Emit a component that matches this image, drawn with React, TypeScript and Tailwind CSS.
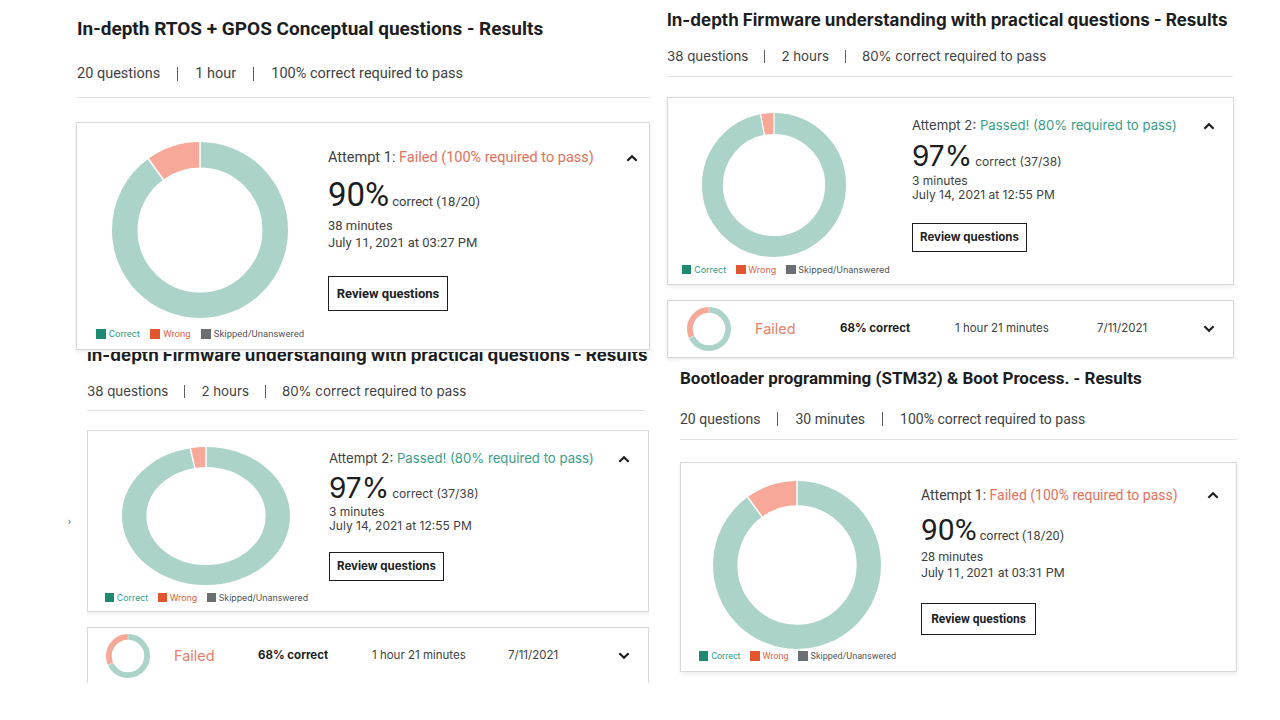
import React from 'react';

// Four pasted result screenshots on a blank canvas

const TEAL = '#acd3ca';
const SALMON = '#f8a899';

type Look = {
  box: string;
  title: string;
  meta: string;
  pipe: string;
  divider: string;
  card: string;
  left: string;
  donut: string;
  donutW: number;
  donutH: number;
  legend: string;
  right: string;
  head: string;
  attempt: string;
  big: string;
  bigNum: string;
  bigSub: string;
  info: string;
  button: string;
  row?: string;
  rowCells?: string[];
};

type Result = {
  title: string;
  meta: string[];
  num: number;
  passed: boolean;
  required: string;
  pct: number;
  detail: string;
  duration: string;
  date: string;
  collapsed?: boolean;
};

const Donut = ({ w, h, pct, t = 14.5 }: { w: number; h: number; pct: number; t?: number }) => {
  const r = 50 - t / 2;
  const sep = (ang: number) => {
    const s = Math.sin(ang);
    const c = Math.cos(ang);
    return (
      <line
        x1={50 + (r - t / 2 - 0.5) * s}
        y1={50 - (r - t / 2 - 0.5) * c}
        x2={50 + (r + t / 2 + 0.5) * s}
        y2={50 - (r + t / 2 + 0.5) * c}
        stroke="white"
        strokeWidth={0.9}
      />
    );
  };
  return (
    <svg width={w} height={h} viewBox="0 0 100 100" preserveAspectRatio="none" className="block">
      <circle
        cx="50"
        cy="50"
        r={r}
        fill="none"
        stroke={TEAL}
        strokeWidth={t}
        pathLength={100}
        strokeDasharray={`${pct} 100`}
        transform="rotate(-90 50 50)"
      />
      <circle
        cx="50"
        cy="50"
        r={r}
        fill="none"
        stroke={SALMON}
        strokeWidth={t}
        pathLength={100}
        strokeDasharray={`${100 - pct} 100`}
        strokeDashoffset={-pct}
        transform="rotate(-90 50 50)"
      />
      {sep(0)}
      {sep((pct / 100) * Math.PI * 2)}
    </svg>
  );
};

const Chevron = ({ down = false }: { down?: boolean }) => (
  <svg width="12" height="8" viewBox="0 0 12 8" className={`block shrink-0 ${down ? 'rotate-180' : ''}`}>
    <path d="M1.4 6.8 L6 2.2 L10.6 6.8" fill="none" stroke="#1c1d1f" strokeWidth="2.1" />
  </svg>
);

const Legend = ({ cls }: { cls: string }) => (
  <div className={`flex items-center ${cls}`}>
    <span className="w-[1.05em] h-[1.05em] bg-[#1e8a72] mr-[0.3em]" />
    <span className="text-[#2f9c86] mr-[1.1em]">Correct</span>
    <span className="w-[1.05em] h-[1.05em] bg-[#e1552f] mr-[0.3em]" />
    <span className="text-[#e5603f] mr-[1.1em]">Wrong</span>
    <span className="w-[1.05em] h-[1.05em] bg-[#6a6f73] mr-[0.3em]" />
    <span className="text-[#4f5458]">Skipped/Unanswered</span>
  </div>
);

const Panel = ({ r, look }: { r: Result; look: Look }) => (
  <div className={`absolute bg-white text-[#1c1d1f] ${look.box}`}>
    <h2 className={`font-bold whitespace-nowrap ${look.title}`}>{r.title}</h2>
    <div className={`flex items-center whitespace-nowrap text-[#3e4143] ${look.meta}`}>
      {r.meta.map((m, i) => (
        <React.Fragment key={m}>
          {i > 0 && <span className={`inline-block w-px bg-[#5a5e62] ${look.pipe}`} />}
          <span>{m}</span>
        </React.Fragment>
      ))}
    </div>
    <div className={`h-px bg-[#e3e3e3] ${look.divider}`} />

    {/* expanded attempt */}
    <div className={`flex border border-[#d6d8da] bg-white shadow-[0_2px_4px_rgba(0,0,0,0.08)] ${look.card}`}>
      <div className={`shrink-0 ${look.left}`}>
        <div className={look.donut}>
          <Donut w={look.donutW} h={look.donutH} pct={r.pct} />
        </div>
        <Legend cls={look.legend} />
      </div>
      <div className={`flex-1 ${look.right}`}>
        <div className={`flex items-center justify-between ${look.head}`}>
          <div className={`whitespace-nowrap text-[#3e4143] ${look.attempt}`}>
            Attempt {r.num}:{' '}
            <span className={r.passed ? 'text-[#3a9e87]' : 'text-[#e4705a]'}>
              {r.passed ? 'Passed!' : 'Failed'} ({r.required})
            </span>
          </div>
          <Chevron />
        </div>
        <div className={`flex items-baseline ${look.big}`}>
          <span className={look.bigNum}>{r.pct}%</span>
          <span className={`text-[#3e4143] ${look.bigSub}`}>{r.detail}</span>
        </div>
        <div className={`text-[#3e4143] ${look.info}`}>
          <div>{r.duration}</div>
          <div>{r.date}</div>
        </div>
        <button className={`flex items-center justify-center border border-[#1c1d1f] font-bold bg-white ${look.button}`}>
          Review questions
        </button>
      </div>
    </div>

    {/* earlier attempt, collapsed */}
    {r.collapsed && look.row && look.rowCells && (
      <div className={`flex items-center border border-[#d6d8da] bg-white shadow-[0_2px_4px_rgba(0,0,0,0.08)] ${look.row}`}>
        <div className={look.rowCells[0]}>
          <Donut w={44} h={44} pct={68} t={13} />
        </div>
        <span className={`text-[14.5px] text-[#e8806a] ${look.rowCells[1]}`}>Failed</span>
        <span className={`text-[11.5px] font-bold ${look.rowCells[2]}`}>68% correct</span>
        <span className={`text-[11.5px] text-[#3e4143] ${look.rowCells[3]}`}>1 hour 21 minutes</span>
        <span className="text-[11.5px] text-[#3e4143]">7/11/2021</span>
        <div className={`ml-auto ${look.rowCells[4]}`}>
          <Chevron down />
        </div>
      </div>
    )}
  </div>
);

const firmware: Result = {
  title: 'In-depth Firmware understanding with practical questions - Results',
  meta: ['38 questions', '2 hours', '80% correct required to pass'],
  num: 2,
  passed: true,
  required: '80% required to pass',
  pct: 97,
  detail: 'correct (37/38)',
  duration: '3 minutes',
  date: 'July 14, 2021 at 12:55 PM',
  collapsed: true,
};

const rtos: Result = {
  title: 'In-depth RTOS + GPOS Conceptual questions - Results',
  meta: ['20 questions', '1 hour', '100% correct required to pass'],
  num: 1,
  passed: false,
  required: '100% required to pass',
  pct: 90,
  detail: 'correct (18/20)',
  duration: '38 minutes',
  date: 'July 11, 2021 at 03:27 PM',
};

const boot: Result = {
  title: 'Bootloader programming (STM32) & Boot Process. - Results',
  meta: ['20 questions', '30 minutes', '100% correct required to pass'],
  num: 1,
  passed: false,
  required: '100% required to pass',
  pct: 90,
  detail: 'correct (18/20)',
  duration: '28 minutes',
  date: 'July 11, 2021 at 03:31 PM',
};

const lookA: Look = {
  box: "left-[76px] top-0 w-[574px] h-[351px] font-['Roboto',sans-serif]",
  title: 'pl-px pt-[17px] text-[19px] leading-[24px]',
  meta: 'pl-px mt-[24px] gap-[17px] text-[14.5px] leading-[18px]',
  pipe: 'h-[14px]',
  divider: 'ml-px mt-[14px] w-[573px]',
  card: 'mt-[24px] h-[228px]',
  left: 'w-[251px] pt-[19px]',
  donut: 'ml-[35px]',
  donutW: 176,
  donutH: 176,
  legend: 'ml-[19px] mt-[10px] h-[12px] text-[9.5px] leading-[12px]',
  right: 'pt-[26px] pr-[11px]',
  head: 'h-[18px]',
  attempt: 'text-[14.5px] leading-[18px]',
  big: 'mt-[10px]',
  bigNum: 'text-[33px] leading-[36px]',
  bigSub: 'ml-[3px] text-[13px]',
  info: 'mt-[4px] text-[13px] leading-[17px]',
  button: 'mt-[25px] w-[120px] h-[35px] text-[13px]',
};

const lookB: Look = {
  box: "left-[667px] top-0 w-[567px] font-['Inter',sans-serif]",
  title: 'pt-[10px] text-[17px] leading-[21px]',
  meta: 'mt-[17px] gap-[16px] text-[13.3px] leading-[17px]',
  pipe: 'h-[13px]',
  divider: 'mt-[11px] w-[566px]',
  card: 'mt-[20px] h-[188px]',
  left: 'w-[244px] pt-[15px]',
  donut: 'ml-[34px]',
  donutW: 144,
  donutH: 144,
  legend: 'ml-[14px] mt-[7px] h-[11px] text-[9px] leading-[11px]',
  right: 'pt-[19px] pr-[18px]',
  head: 'h-[17px]',
  attempt: 'text-[13.2px] leading-[17px]',
  big: 'mt-[7px]',
  bigNum: 'text-[28px] leading-[30px]',
  bigSub: 'ml-[3px] text-[12px]',
  info: 'mt-[3px] text-[12px] leading-[14px]',
  button: 'mt-[21px] w-[115px] h-[29px] text-[11.5px]',
  row: 'mt-[15px] h-[58px] pl-[19px]',
  rowCells: ['w-[68px]', 'w-[85px]', 'w-[115px]', 'w-[142px]', 'pr-[18px]'],
};

const lookC: Look = {
  box: "left-[87px] top-[352px] w-[562px] h-[331px] overflow-hidden font-['Inter',sans-serif]",
  title: '-mt-[7px] text-[17px] leading-[21px]',
  meta: 'mt-[17px] gap-[16px] text-[13.3px] leading-[17px]',
  pipe: 'h-[13px]',
  divider: 'mt-[10px] w-[558px]',
  card: 'mt-[19px] h-[182px]',
  left: 'w-[241px] pt-[16px]',
  donut: 'ml-[34px]',
  donutW: 168,
  donutH: 138,
  legend: 'ml-[17px] mt-[7px] h-[11px] text-[8.8px] leading-[11px]',
  right: 'pt-[19px] pr-[18px]',
  head: 'h-[17px]',
  attempt: 'text-[13.2px] leading-[17px]',
  big: 'mt-[6px]',
  bigNum: 'text-[28px] leading-[30px]',
  bigSub: 'ml-[3px] text-[12px]',
  info: 'mt-[2px] text-[12px] leading-[14px]',
  button: 'mt-[19px] w-[115px] h-[29px] text-[11.5px]',
  row: 'mt-[15px] h-[58px] pl-[18px]',
  rowCells: ['w-[68px]', 'w-[84px]', 'w-[114px]', 'w-[136px]', 'pr-[18px]'],
};

const lookD: Look = {
  box: "left-[680px] top-[360px] w-[557px] font-['Roboto',sans-serif]",
  title: 'pt-[7px] text-[17px] leading-[22px]',
  meta: 'mt-[21px] gap-[17px] text-[14px] leading-[18px]',
  pipe: 'h-[14px]',
  divider: 'mt-[11px] w-[557px]',
  card: 'mt-[22px] h-[210px]',
  left: 'w-[240px] pt-[18px]',
  donut: 'ml-[32px]',
  donutW: 168,
  donutH: 168,
  legend: 'ml-[18px] mt-px h-[12px] text-[9px] leading-[12px]',
  right: 'pt-[23px] pr-[17px]',
  head: 'h-[18px]',
  attempt: 'text-[14px] leading-[18px]',
  big: 'mt-[9px]',
  bigNum: 'text-[30px] leading-[34px]',
  bigSub: 'ml-[3px] text-[12.5px]',
  info: 'mt-[2px] text-[12.5px] leading-[16px]',
  button: 'mt-[22px] w-[115px] h-[32px] text-[12px]',
};

export default function App() {
  return (
    <div className="relative w-[1280px] h-[720px] overflow-hidden bg-white">
      <Panel r={firmware} look={lookC} />
      <Panel r={rtos} look={lookA} />
      <Panel r={firmware} look={lookB} />
      <Panel r={boot} look={lookD} />
      <span className="absolute left-[68px] top-[514px] text-[10px] text-[#555] font-['Roboto',sans-serif]">›</span>
    </div>
  );
}
